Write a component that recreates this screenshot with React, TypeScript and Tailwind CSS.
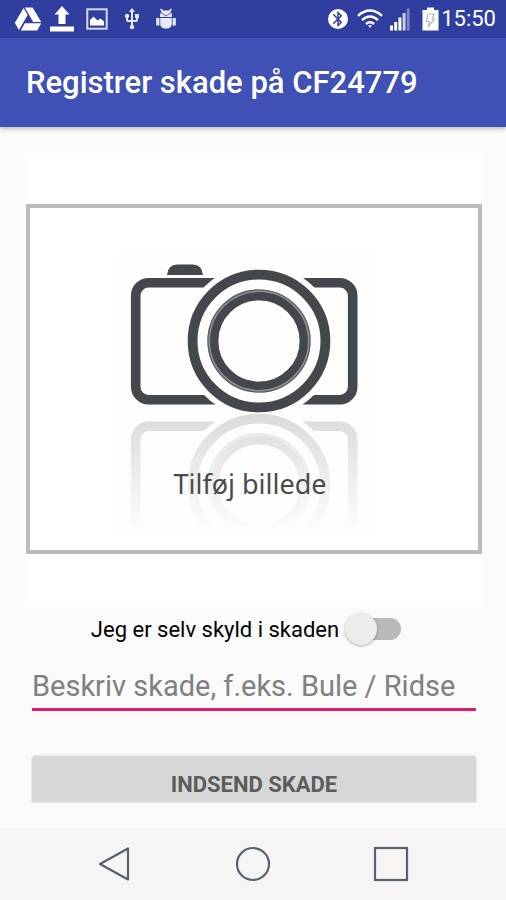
import { useState } from "react";
import { MdUsb, MdBluetooth } from "react-icons/md";

function DriveIcon() {
  return (
    <svg viewBox="0 0 28 24" className="h-6 w-7" fill="#fff" aria-hidden>
      <path d="M9.6 1 L13.6 8 L5 23 L0.8 16 Z" />
      <path d="M10.8 0.5 H18.6 L27.2 15 H19.2 Z" />
      <path d="M10.8 16.2 H27.2 L23.2 23.4 H6.8 Z" />
    </svg>
  );
}

function UploadIcon() {
  return (
    <svg viewBox="0 0 26 28" className="h-7 w-7" fill="#fff" aria-hidden>
      <path d="M13 1 L20.5 9.5 H16.5 V19 H9.5 V9.5 H5.5 Z" />
      <rect x="1" y="21.5" width="24" height="5" />
    </svg>
  );
}

function PictureIcon() {
  return (
    <svg viewBox="0 0 22 22" className="size-[22px]" aria-hidden>
      <rect x="1.3" y="1.3" width="19.4" height="19.4" fill="none" stroke="#d5d9f3" strokeWidth="2" />
      <path d="M4 17.5 V12 L7.5 8.5 L11.5 12.5 L14.5 10.5 L18 13.5 V17.5 Z" fill="#fff" />
    </svg>
  );
}

function BugIcon() {
  return (
    <svg viewBox="0 0 20 22" className="h-[22px] w-5" fill="#e8eafa" aria-hidden>
      <path d="M4 1.2 L5 0.4 L7.2 2.6 H12.8 L15 0.4 L16 1.2 L14.6 3.4 Q16 5 16 9 H4 Q4 5 5.4 3.4 Z" />
      <path d="M4.2 10 H15.8 V16 Q15.4 20.4 10 20.8 Q4.6 20.4 4.2 16 Z" />
      <path d="M0.2 10 H3.4 V17.5 H0.2 Z M16.6 10 H19.8 V17.5 H16.6 Z" />
      <path d="M5 4.6 L10 8 L15 4.6" fill="none" stroke="#5c68b8" strokeWidth="1" />
    </svg>
  );
}

function WifiIcon() {
  return (
    <svg viewBox="0 0 26 20" className="h-5 w-7" fill="none" stroke="#fff" strokeWidth="2.4" aria-hidden>
      <path d="M1 6.8 Q13 -3.6 25 6.8" />
      <path d="M5 11 Q13 4 21 11" />
      <path d="M9 15 Q13 11.4 17 15" />
      <path d="M11 16.2 H15 L13 19 Z" fill="#fff" stroke="none" />
    </svg>
  );
}

function SignalIcon() {
  return (
    <svg viewBox="0 0 20 23" className="h-6 w-5" fill="#fff" aria-hidden>
      <rect x="0" y="18" width="3" height="5" />
      <rect x="4.2" y="14.5" width="3" height="8.5" />
      <rect x="8.4" y="10" width="3" height="13" />
      <rect x="12.6" y="5.5" width="3" height="17.5" fill="#c9cdea" />
      <rect x="16.8" y="1" width="2.8" height="22" fill="#7d87c6" />
    </svg>
  );
}

function BatteryIcon() {
  return (
    <svg viewBox="0 0 17 24" className="h-6 w-[17px]" aria-hidden>
      <path d="M5 0.5 H12 V3 H16.5 V23.5 H0.5 V3 H5 Z" fill="#fff" />
      <path d="M6 7 H12 L10 12 H12.5 L6 20 L7.5 14.5 H4.5 Z" fill="#fff" stroke="#b4b7c4" strokeWidth="1.2" />
    </svg>
  );
}

function StatusBar() {
  return (
    <div className="flex h-[38px] items-center justify-between bg-[#303f9f] pr-2.5 pl-3.5 text-white">
      <div className="flex items-center">
        <DriveIcon />
        <div className="ml-1.5 flex">
          <UploadIcon />
        </div>
        <div className="ml-2.5 flex">
          <PictureIcon />
        </div>
        <MdUsb className="ml-3 size-6 text-[#e4e7fa]" />
        <div className="ml-3 flex">
          <BugIcon />
        </div>
      </div>
      <div className="flex items-center">
        <span className="mr-2 flex size-5 items-center justify-center rounded-full bg-white">
          <MdBluetooth className="size-[18px] text-[#303f9f]" />
        </span>
        <WifiIcon />
        <div className="ml-1.5 flex">
          <SignalIcon />
        </div>
        <div className="ml-3 flex">
          <BatteryIcon />
        </div>
        <span className="ml-0.5 text-[22px] leading-6">15:50</span>
      </div>
    </div>
  );
}

function CameraDrawing() {
  return (
    <svg viewBox="0 0 448 342" className="block w-full" aria-hidden>
      <defs>
        <mask id="lens-gap" maskUnits="userSpaceOnUse" x="0" y="0" width="448" height="342">
          <rect width="448" height="342" fill="#fff" />
          <circle cx="229" cy="133" r="77" fill="#000" />
        </mask>
        <linearGradient id="fade" gradientUnits="userSpaceOnUse" x1="0" y1="205" x2="0" y2="324">
          <stop offset="0" stopColor="#fff" stopOpacity="0.19" />
          <stop offset="0.5" stopColor="#fff" stopOpacity="0.09" />
          <stop offset="1" stopColor="#fff" stopOpacity="0" />
        </linearGradient>
        <mask id="reflection" maskUnits="userSpaceOnUse" x="0" y="0" width="448" height="342">
          <rect y="205" width="448" height="119" fill="url(#fade)" />
        </mask>
        <g id="camera" fill="none" stroke="#44474b">
          <rect x="105.7" y="74.7" width="217" height="117" rx="13" strokeWidth="9.6" mask="url(#lens-gap)" />
          <path d="M137 67 Q138 56.5 147 56.5 H163 Q172 56.5 173 67 Z" fill="#44474b" stroke="none" />
          <circle cx="229" cy="133" r="66.4" strokeWidth="9.8" />
          <circle cx="229" cy="133" r="46.2" strokeWidth="10.8" stroke="#8d8f92" />
          <circle cx="229" cy="133" r="44.8" strokeWidth="8.2" />
          <circle cx="229" cy="133" r="51" strokeWidth="1.2" stroke="#5b5e61" />
        </g>
      </defs>
      <rect x="88" y="45" width="253" height="279" fill="#fdfdfd" />
      <use href="#camera" />
      <g mask="url(#reflection)">
        <use href="#camera" transform="translate(0 410) scale(1 -1)" />
      </g>
    </svg>
  );
}

function NavBar() {
  return (
    <nav className="flex h-[72px] items-center justify-center gap-[102px] bg-[#f5f5f5]">
      <button type="button" aria-label="Tilbage">
        <svg viewBox="0 0 36 36" className="size-9" fill="none" stroke="#56636d" strokeWidth="2.2">
          <path d="M31 2.5 V33.5 L3 18 Z" strokeLinejoin="round" />
        </svg>
      </button>
      <button type="button" aria-label="Hjem">
        <svg viewBox="0 0 36 36" className="size-9" fill="none" stroke="#56636d" strokeWidth="2.2">
          <circle cx="18" cy="18" r="16" />
        </svg>
      </button>
      <button type="button" aria-label="Seneste apps">
        <svg viewBox="0 0 36 36" className="size-9" fill="none" stroke="#56636d" strokeWidth="2.2">
          <rect x="2" y="2" width="32" height="32" />
        </svg>
      </button>
    </nav>
  );
}

export default function App() {
  const [ownFault, setOwnFault] = useState(false);
  const [description, setDescription] = useState("");

  return (
    <div className="flex min-h-screen flex-col bg-[#fafafa] font-['Roboto',sans-serif]">
      <StatusBar />
      <header className="flex h-[89px] items-center bg-[#3f51b5] px-[26px] shadow-[0_2px_4px_rgba(0,0,0,0.25)]">
        <h1 className="text-[31px] leading-9 font-medium text-white">Registrer skade på CF24779</h1>
      </header>

      <form
        className="flex flex-1 flex-col pt-[26px] pr-[23px] pl-[25px]"
        onSubmit={(e) => e.preventDefault()}
      >
        <div className="bg-white px-px pt-[51px] pb-[53px]">
          <button type="button" className="relative block w-full border-4 border-[#bbbbbb] bg-white">
            <CameraDrawing />
            <span className="absolute inset-x-0 bottom-[50px] pr-2 text-center font-['Noto_Sans',sans-serif] text-[27px] leading-8 text-[#4a4a4a]">
              Tilføj billede
            </span>
          </button>
        </div>

        <label className="flex h-11 items-center justify-center pr-4 text-[22px] text-black">
          Jeg er selv skyld i skaden
          <span className="relative ml-1.5 flex h-9 w-14 items-center">
            <input
              type="checkbox"
              role="switch"
              checked={ownFault}
              onChange={(e) => setOwnFault(e.target.checked)}
              className="peer ml-2 h-[22px] w-12 appearance-none rounded-full bg-[#b9b9b9]"
            />
            <span className="pointer-events-none absolute left-0 size-8 rounded-full bg-[#ececec] shadow-[0_1px_3px_rgba(0,0,0,0.3)] peer-checked:left-6" />
          </span>
        </label>

        <div className="mt-3 px-[7px]">
          <input
            type="text"
            aria-label="Beskriv skade"
            placeholder="Beskriv skade, f.eks. Bule / Ridse"
            value={description}
            onChange={(e) => setDescription(e.target.value)}
            className="h-12 w-full border-b-[3px] border-[#e01c6c] bg-transparent text-[29px] text-black outline-none placeholder:text-[#808080]"
          />
        </div>

        <div className="mt-[45px] px-[7px]">
          <button
            type="submit"
            className="h-[46px] w-full rounded-t-sm bg-[#d6d7d7] pt-3 text-[22px] leading-8 font-bold text-[#5c5c5c] shadow-[0_0_2px_rgba(0,0,0,0.25)]"
          >
            INDSEND SKADE
          </button>
        </div>
      </form>

      <NavBar />
    </div>
  );
}
